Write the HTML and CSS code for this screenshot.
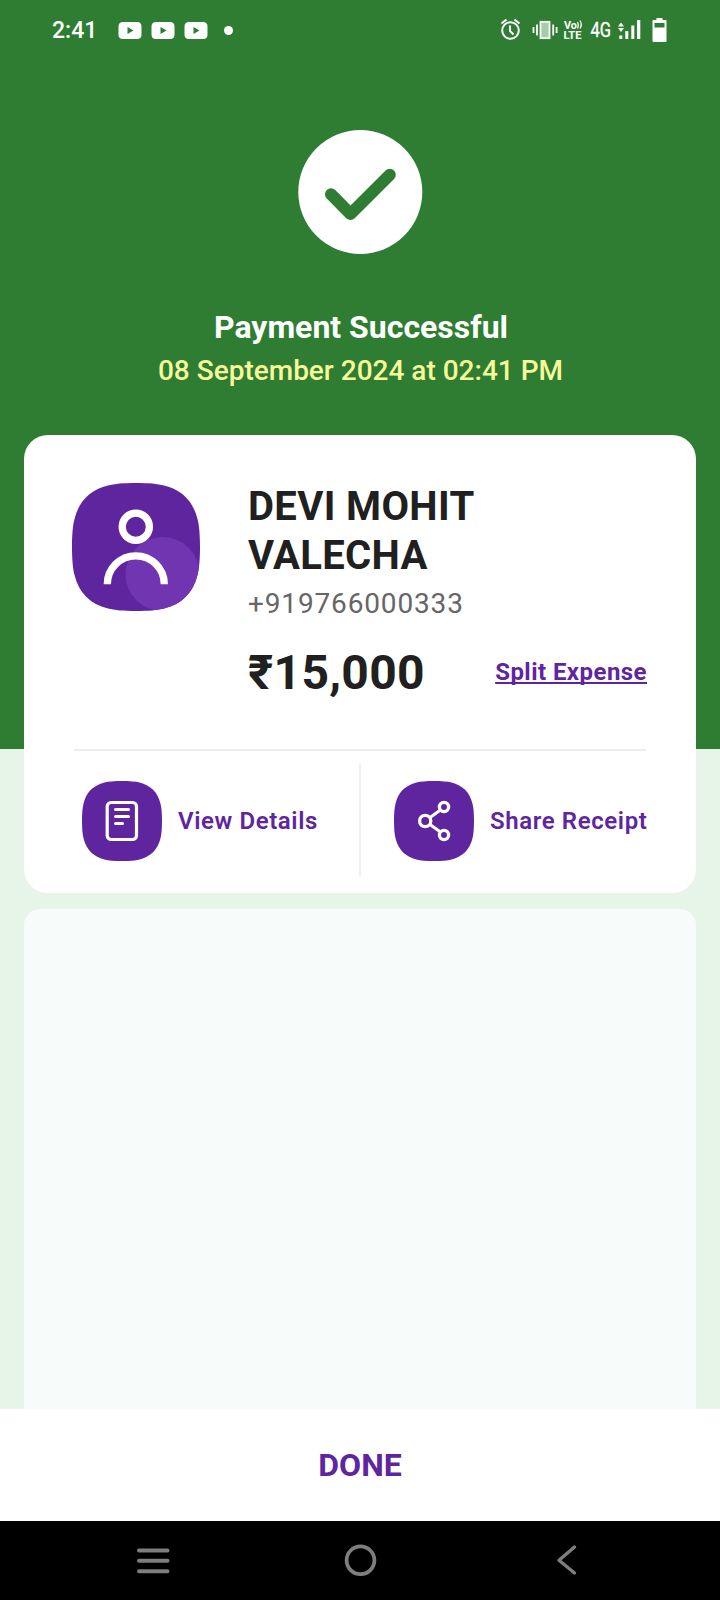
FILE: index.html
```html
<!DOCTYPE html>
<html lang="en">
<head>
<meta charset="utf-8">
<title>Payment Successful</title>
<link rel="stylesheet" href="styles.css">
</head>
<body>
<div class="screen">
  <header class="status">
    <span class="clock">2:41</span>
    <div class="notifs">
      <svg class="yt" viewBox="0 0 24 17"><path fill="#fff" fill-rule="evenodd" d="M5 0H19Q23.500 0 23.500 4.500V12.500Q23.500 17 19 17H5Q.5 17 .5 12.500V4.500Q.5 0 5 0ZM9.500 5V12L15.500 8.500Z"/></svg>
      <svg class="yt" viewBox="0 0 24 17"><path fill="#fff" fill-rule="evenodd" d="M5 0H19Q23.500 0 23.500 4.500V12.500Q23.500 17 19 17H5Q.5 17 .5 12.500V4.500Q.5 0 5 0ZM9.500 5V12L15.500 8.500Z"/></svg>
      <svg class="yt" viewBox="0 0 24 17"><path fill="#fff" fill-rule="evenodd" d="M5 0H19Q23.500 0 23.500 4.500V12.500Q23.500 17 19 17H5Q.5 17 .5 12.500V4.500Q.5 0 5 0ZM9.500 5V12L15.500 8.500Z"/></svg>
    </div>
    <i class="dot"></i>
    <svg class="system" viewBox="0 0 180 30" fill="none" stroke="#fff">
      <!-- alarm -->
      <circle cx="10.500" cy="15.500" r="8.300" stroke-width="2"/>
      <path d="M10 10.500V16l3.500 3.500M1.500 8.500l5-4M14.500 4.500l5 4" stroke-width="2"/>
      <!-- vibrate -->
      <rect x="40.500" y="6.800" width="9" height="16.400" stroke-width="1.800" fill="#a6cba8"/>
      <path d="M37 9.500v11M53.200 9.500v11M33.500 12v6M56.600 12v6" stroke-width="1.800"/>
      <!-- volte -->
      <g fill="#fff" stroke="none" class="volte">
        <text x="64" y="13.500" textLength="13" lengthAdjust="spacingAndGlyphs">Vo</text>
        <text x="63.500" y="24.200" textLength="18" lengthAdjust="spacingAndGlyphs">LTE</text>
      </g>
      <path d="M77.600 7q1.500 3 0 6.500M80 5.500q2.500 4 0 8" stroke-width="1.300"/>
      <text x="90.500" y="22" class="net" textLength="20.500" lengthAdjust="spacingAndGlyphs">4G</text>
      <!-- signal -->
      <g fill="#fff" stroke="none">
        <path d="M118 11.500l3-4 3 4zM118 13l3 4 3-4zM119.300 20.500h3V24h-3zM125.300 16h3v8h-3zM131.300 10.500h3V24h-3zM137 5h3.300v19H137z"/>
        <path fill-rule="evenodd" d="M156.500 3h6v2h3q1 0 1 1v20q0 1-1 1h-12q-1 0-1-1V6q0-1 1-1h3zM154.500 8v4.500h10V8z"/>
      </g>
    </svg>
  </header>

  <main class="content">
    <section class="hero">
      <svg class="tick" viewBox="0 0 124 124"><circle cx="62.300" cy="62" r="62" fill="#fff"/><path d="M33 64.300 52.500 84 91.800 44.700" fill="none" stroke="#2e7d32" stroke-width="12" stroke-linecap="round" stroke-linejoin="round"/></svg>
      <h1 class="title">Payment Successful</h1>
      <p class="date">08 September 2024 at 02:41 PM</p>
    </section>

    <section class="card">
      <div class="payee">
        <svg class="avatar" viewBox="0 0 128 128">
          <clipPath id="squircle"><path d="M64 0C76 0 86 .8 92 2.500C110 7 121 18 125.500 36C127.200 42 128 52 128 64S127.200 86 125.500 92C121 110 110 121 92 125.500C86 127.200 76 128 64 128S42 127.200 36 125.500C18 121 7 110 2.500 92C.8 86 0 76 0 64S.8 42 2.500 36C7 18 18 7 36 2.500C42 .8 52 0 64 0Z"/></clipPath>
          <g clip-path="url(#squircle)">
            <path d="M0 0H128V128H0Z" fill="#5f259f"/>
            <circle cx="90.500" cy="91" r="37" fill="#7135b1"/>
          </g>
          <g fill="none" stroke="#fff" stroke-width="7.300">
            <circle cx="63.800" cy="43.800" r="13.600"/>
            <path d="M35.300 101.300a28.500 28.500 0 0 1 57 0"/>
          </g>
        </svg>
        <div class="info">
          <h2 class="name">DEVI MOHIT<br>VALECHA</h2>
          <p class="phone">+919766000333</p>
          <div class="sum"><strong class="amount">₹15,000</strong><a class="split">Split Expense</a></div>
        </div>
      </div>
      <div class="actions">
        <div class="action">
          <svg class="icon" viewBox="0 0 80 80">
            <path transform="scale(.625)" d="M64 0C76 0 86 .8 92 2.500C110 7 121 18 125.500 36C127.200 42 128 52 128 64S127.200 86 125.500 92C121 110 110 121 92 125.500C86 127.200 76 128 64 128S42 127.200 36 125.500C18 121 7 110 2.500 92C.8 86 0 76 0 64S.8 42 2.500 36C7 18 18 7 36 2.500C42 .8 52 0 64 0Z" fill="#5f259f"/>
            <g fill="none" stroke="#fff" stroke-width="3.200" stroke-linecap="round"><rect x="25.200" y="21.500" width="29.300" height="37" rx="4"/><path d="M33.500 28.500h13M33.500 35.500h13M33.500 42.500h7" stroke-width="3"/></g>
          </svg>
          <span class="label">View Details</span>
        </div>
        <i class="divider"></i>
        <div class="action second">
          <svg class="icon" viewBox="0 0 80 80">
            <path transform="scale(.625)" d="M64 0C76 0 86 .8 92 2.500C110 7 121 18 125.500 36C127.200 42 128 52 128 64S127.200 86 125.500 92C121 110 110 121 92 125.500C86 127.200 76 128 64 128S42 127.200 36 125.500C18 121 7 110 2.500 92C.8 86 0 76 0 64S.8 42 2.500 36C7 18 18 7 36 2.500C42 .8 52 0 64 0Z" fill="#5f259f"/>
            <g fill="none" stroke="#fff" stroke-width="3.300"><circle cx="31.200" cy="40" r="5.600"/><circle cx="50" cy="26" r="4.600"/><circle cx="50" cy="54" r="4.600"/><path d="M36 36.500 46.500 29M36 43.500 46.500 51" stroke-width="3"/></g>
          </svg>
          <span class="label">Share Receipt</span>
        </div>
      </div>
    </section>

    <section class="panel"></section>
  </main>

  <footer class="done">DONE</footer>
  <nav class="nav">
    <svg class="navicon" viewBox="0 0 40 40"><path d="M6 10.500h28.500M6 20.800h28.500M6 31.300h28.500" stroke="#7e7e7e" stroke-width="4" stroke-linecap="round"/></svg>
    <svg class="navicon" viewBox="0 0 40 40"><circle cx="23.500" cy="20.300" r="13.900" fill="none" stroke="#7e7e7e" stroke-width="3.800"/></svg>
    <svg class="navicon" viewBox="0 0 40 40"><path d="M34.500 7 19 20.300 34.500 33" fill="none" stroke="#7e7e7e" stroke-width="3.400" stroke-linecap="round" stroke-linejoin="round"/></svg>
  </nav>
</div>
</body>
</html>
```
FILE: styles.css
```css
* { box-sizing: border-box; }
body { margin: 0; font-family: Roboto, "Noto Sans", sans-serif; }
h1, h2, p { margin: 0; }
svg { display: block; flex: none; overflow: visible; }
.screen {
  width: 720px;
  height: 1600px;
  display: flex;
  flex-direction: column;
  overflow: hidden;
  background: linear-gradient(#2e7d32 749px, #e7f5e8 749px);
}
.status { display: flex; align-items: center; height: 60px; flex: none; padding: 0 40px 0 52px; color: #fff; }
.clock { width: 66px; font-size: 23px; font-weight: 500; line-height: 28px; padding-top: 2px; }
.notifs { display: flex; gap: 9px; }
.yt { width: 24px; height: 17px; }
.dot { width: 9px; height: 9px; margin-left: 16px; border-radius: 50%; background: #fff; }
.system { width: 180px; height: 30px; margin-left: auto; }
.volte { font-size: 10.500px; font-weight: 700; }
.net { font-size: 21px; fill: #fff; stroke: #fff; stroke-width: .4px; }
.content { flex: none; height: 1349px; display: flex; flex-direction: column; padding: 0 24px; }
.hero { height: 375px; padding: 70px 0 0 1px; display: flex; flex-direction: column; align-items: center; }
.tick { width: 124px; height: 124px; margin-right: 1px; }
.title { margin-top: 54px; padding-left: 1px; font-size: 32px; line-height: 38px; font-weight: 700; color: #fff; }
.date { margin-top: 8px; font-size: 28px; line-height: 34px; font-weight: 500; color: #f7f89a; }
.card { height: 458px; background: #fff; border-radius: 24px; padding: 48px 48px 0 49px; }
.payee { display: flex; gap: 48px; height: 266px; margin: 0 1px 0 -1px; }
.avatar { width: 128px; height: 128px; }
.info { flex: 1; margin-top: -1px; }
.name { font-size: 40px; line-height: 49px; font-weight: 700; color: #202020; letter-spacing: .35px; }
.phone { margin-top: 7px; font-size: 28px; line-height: 34px; color: #666; letter-spacing: .85px; }
.sum { display: flex; justify-content: space-between; align-items: center; margin-top: 24px; }
.amount { font-size: 48px; line-height: 56px; color: #202020; letter-spacing: .3px; }
.split { font-size: 24px; line-height: 28px; padding-bottom: 2px; font-weight: 700; color: #5f259f; letter-spacing: .45px; text-decoration: underline; text-decoration-thickness: 1.500px; text-underline-offset: 2px; text-decoration-skip-ink: none; }
.actions { display: flex; align-items: center; height: 142px; border-top: 2px solid #ededed; margin: 0 2px 0 1px; }
.action { display: flex; align-items: center; gap: 16px; width: 285px; padding-left: 8px; flex: none; }
.second { padding-left: 33px; }
.icon { width: 80px; height: 80px; }
.label { font-size: 24px; line-height: 28px; font-weight: 600; color: #5f259f; letter-spacing: .6px; white-space: nowrap; }
.divider { width: 2px; height: 112px; margin-top: -2px; background: #efefef; }
.panel { flex: 1; margin-top: 16px; border-radius: 16px 16px 0 0; background: #f7fbfa; }
.done { height: 112px; flex: none; background: #fff; display: flex; align-items: center; justify-content: center; font-size: 32px; font-weight: 700; color: #5f259f; }
.nav { flex: 1; background: #000; display: flex; align-items: center; justify-content: space-between; padding: 0 140px 2px 133px; }
.navicon { width: 40px; height: 40px; }
```
